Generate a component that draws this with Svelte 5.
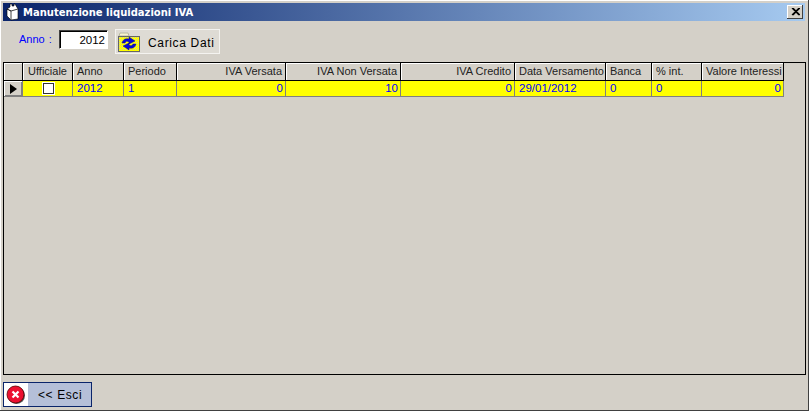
<script>
	const columns = [
		{ label: "Ufficiale", width: 50, check: true },
		{ label: "Anno", width: 51, value: "2012" },
		{ label: "Periodo", width: 53, value: "1" },
		{ label: "IVA Versata", width: 109, value: "0", right: true },
		{ label: "IVA Non Versata", width: 115, value: "10", right: true },
		{ label: "IVA Credito", width: 114, value: "0", right: true },
		{ label: "Data Versamento", width: 91, value: "29/01/2012" },
		{ label: "Banca", width: 46, value: "0" },
		{ label: "% int.", width: 50, value: "0" },
		{ label: "Valore Interessi", width: 82, value: "0", right: true },
	];
	const template = "19px " + columns.map((c) => c.width + "px").join(" ");

	// sparse dots over the yellow folder
	const dots = [];
	for (let y = 6; y < 20; y += 2) {
		for (let x = 2; x < 22; x += 2) {
			dots.push({ x, y });
		}
	}
</script>

<div class="window">
	<div class="titlebar">
		<svg class="title-icon" width="16" height="18" viewBox="0 0 16 18">
			<path d="M2 6 L5 4 L5 1 L7 1 L7 3 L9 3 L9 1 L10 1 L13 6 L13 16 L6 17 L2 13 Z" fill="#fff" stroke="#000" stroke-width="0.6" />
			<path d="M6 8 L6 17 M6 8 L13 6" stroke="#444" stroke-width="1" fill="none" />
			<path d="M2 6 L6 8" stroke="#000" stroke-width="1" />
		</svg>
		<span class="title">Manutenzione liquidazioni IVA</span>
		<button class="close" aria-label="Chiudi">
			<svg width="9" height="8" viewBox="0 0 9 8">
				<path d="M1 0 L8 7 M2 0 L9 7 M8 0 L1 7 M9 0 L2 7" stroke="#000" stroke-width="1.1" fill="none" />
			</svg>
		</button>
	</div>

	<div class="toolbar">
		<label class="year-label" for="anno">Anno :</label>
		<input id="anno" class="year" value="2012" />
		<button class="load">
			<svg width="24" height="22" viewBox="0 0 24 22">
				<path d="M2 5 L3 2 L11 2 L12 5 Z" fill="#f8f4d0" stroke="#b8b8a0" />
				<rect x="1.5" y="5.5" width="21" height="15" fill="#ffff00" stroke="#666" />
				<g shape-rendering="crispEdges">
					{#each dots as d}
						<rect x={d.x} y={d.y} width="1" height="1" fill="#d0d098" />
					{/each}
				</g>
				<path d="M5 12 C6 8 9 7 12 8 L12 6 L18 10 L12 13 L12 11 C10 10 9 10 8 12 Z" fill="#0808d8" stroke="#000060" stroke-width="0.4" />
				<path d="M19 13 C18 17 15 18 12 17 L12 19 L6 15 L12 12 L12 14 C14 15 15 15 16 13 Z" fill="#0808d8" stroke="#000060" stroke-width="0.4" />
			</svg>
			<span class="load-label">Carica Dati</span>
		</button>
	</div>

	<div class="grid">
		<div class="row head" style="grid-template-columns: {template}">
			<div class="hcell"></div>
			{#each columns as c}
				<div class="hcell" class:right={c.right} class:mid={c.check}>{c.label}</div>
			{/each}
		</div>
		<div class="row data" style="grid-template-columns: {template}">
			<div class="hcell pointer"><span class="arrow"></span></div>
			{#each columns as c}
				<div class="cell" class:right={c.right} class:center={c.check}>
					{#if c.check}<span class="checkbox"></span>{:else}{c.value}{/if}
				</div>
			{/each}
		</div>
	</div>

	<div class="footer">
		<button class="exit">
			<span class="exit-icon">
				<svg width="20" height="20" viewBox="0 0 20 20">
					<circle cx="10.5" cy="10.5" r="8.5" fill="#555" />
					<circle cx="9.5" cy="9.5" r="8.5" fill="#ec1030" stroke="#500" stroke-width="0.8" />
					<path d="M6.5 6.5 L12.5 12.5 M12.5 6.5 L6.5 12.5" stroke="#fff" stroke-width="2.2" />
				</svg>
			</span>
			<span class="exit-label">&lt;&lt; Esci</span>
		</button>
	</div>
</div>

<style>
	:global(body) {
		margin: 0;
		background: #d4d0c8;
	}
	.window {
		width: 809px;
		height: 411px;
		box-sizing: border-box;
		padding: 3px;
		display: flex;
		flex-direction: column;
		background: #d4d0c8;
		border-right: 1px solid #404040;
		border-bottom: 1px solid #404040;
		box-shadow: inset 1px 1px 0 #fff;
		font-family: "Liberation Sans", Arial, sans-serif;
		font-size: 11px;
		color: #000;
	}
	.titlebar {
		height: 18px;
		flex: none;
		display: flex;
		align-items: center;
		padding: 0 2px;
		background: linear-gradient(90deg, #0a246a, #a6caf0);
	}
	.title-icon {
		flex: none;
	}
	.title {
		margin-left: 2px;
		flex: 1;
		color: #fff;
		font-family: "DejaVu Sans", sans-serif;
		font-weight: bold;
		font-size: 10px;
	}
	.close {
		width: 16px;
		height: 14px;
		padding: 0;
		display: flex;
		align-items: center;
		justify-content: center;
		background: #d4d0c8;
		border: none;
		box-shadow: inset -1px -1px 0 #404040, inset 1px 1px 0 #fff;
	}
	.toolbar {
		height: 41px;
		flex: none;
		display: flex;
		align-items: flex-start;
		padding-left: 16px;
		box-sizing: border-box;
	}
	.year-label {
		margin-top: 12px;
		width: 40px;
		font-size: 11px;
		word-spacing: 1px;
		color: #0000ff;
	}
	.year {
		margin-top: 9px;
		width: 49px;
		height: 19px;
		box-sizing: border-box;
		padding: 0 2px 0 0;
		text-align: right;
		font: inherit;
		font-size: 11.5px;
		background: #fff;
		border: 1px solid;
		border-color: #404040 #fff #fff #404040;
		box-shadow: inset 1px 1px 0 #000;
		outline: none;
	}
	.load {
		margin: 8px 0 0 7px;
		width: 105px;
		height: 25px;
		padding: 0 0 0 1px;
		display: flex;
		align-items: center;
		gap: 7px;
		font: inherit;
		font-size: 12px;
		letter-spacing: 0.65px;
		background: #dedbd4;
		border: 1px solid #f4f3f0;
	}
	.load-label {
		margin-top: 2px;
	}
	.grid {
		flex: 1;
		min-height: 0;
		background: #d4d0c8;
		border: 1px solid #000;
		box-sizing: border-box;
		width: 803px;
	}
	.row {
		display: grid;
		width: max-content;
	}
	.head {
		height: 17px;
		border-bottom: 1px solid #000;
	}
	.data {
		height: 15px;
		border-bottom: 1px solid #808080;
	}
	.hcell {
		box-sizing: border-box;
		padding: 0 3px 0 4px;
		line-height: 16px;
		white-space: nowrap;
		overflow: hidden;
		background: #d4d0c8;
		box-shadow: inset 1px 1px 0 #fff;
		border-right: 1px solid #000;
		color: #222;
	}
	.mid {
		text-align: center;
		padding: 0;
	}
	.pointer {
		display: flex;
		align-items: center;
		padding-left: 6px;
		border-right: 1px solid #808080;
		box-shadow: inset 1px 1px 0 #fff, inset -1px -1px 0 #808080;
	}
	.arrow {
		width: 0;
		height: 0;
		border-left: 7px solid #000;
		border-top: 5.5px solid transparent;
		border-bottom: 5.5px solid transparent;
	}
	.cell {
		box-sizing: border-box;
		padding: 0 2px 0 4px;
		font-size: 11.5px;
		line-height: 15px;
		white-space: nowrap;
		background: #ffff00;
		color: #0000ff;
		border-right: 1px solid #808080;
	}
	.right {
		text-align: right;
	}
	.center {
		display: flex;
		align-items: center;
		justify-content: center;
	}
	.checkbox {
		width: 11px;
		height: 11px;
		box-sizing: border-box;
		background: #fff;
		border: 1px solid #333;
		box-shadow: 0 0 0 1px #fff;
	}
	.footer {
		flex: none;
		height: 32px;
		display: flex;
		align-items: flex-end;
	}
	.exit {
		width: 89px;
		height: 25px;
		padding: 0;
		display: flex;
		font: inherit;
		font-size: 12px;
		background: #b5bfd8;
		border: 1px solid #0a246a;
	}
	.exit-icon {
		width: 24px;
		height: 100%;
		display: flex;
		align-items: center;
		justify-content: center;
		background: #fff;
	}
	.exit-label {
		margin-left: 10px;
		line-height: 25px;
		letter-spacing: 0.6px;
	}
</style>
